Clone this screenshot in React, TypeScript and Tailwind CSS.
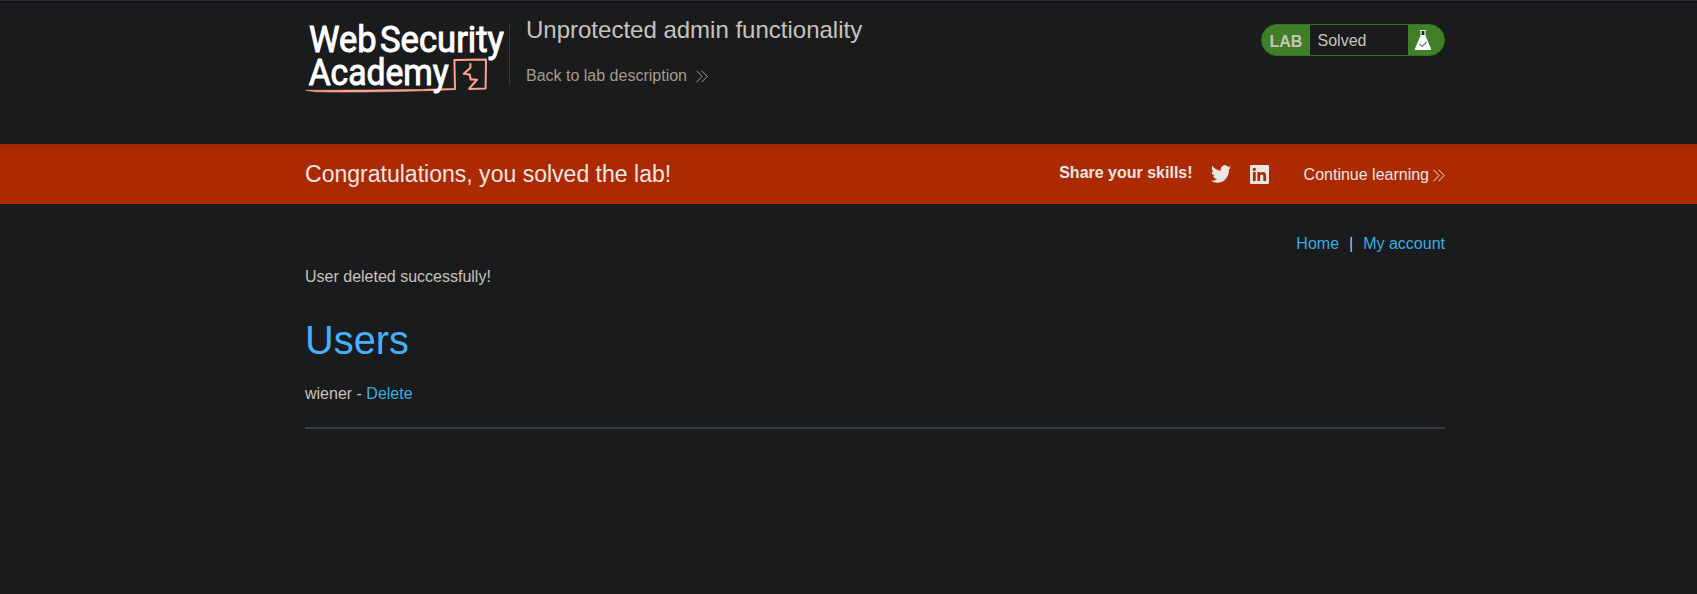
import React from 'react';

function Chevrons({ className }: { className?: string }) {
  return (
    <svg className={className} width="12" height="13" viewBox="0 0 12 13" fill="none" stroke="currentColor" strokeWidth="1">
      <path d="M0.6 0.8 6 6.5 0.6 12.2M5.6 0.8 11.2 6.5 5.6 12.2" />
    </svg>
  );
}

function Logo() {
  return (
    <svg width="205" height="90" viewBox="304 10 205 90" className="shrink-0" role="img" aria-label="Web Security Academy">
      <g fill="none" stroke="#ffa28b" strokeLinejoin="round" strokeLinecap="round">
        <path d="M425 90 455 89 454.4 60 486 59.6 485.6 88.6 469.4 89" strokeWidth="2" />
        <path d="M470.4 64 470.4 67.8 463.8 73.8 469.8 74.6 470.6 79.4 477 79.8 469.4 88.4" strokeWidth="2.1" />
        <path d="M306 90.3C345 90.3 400 89.7 432 89.3L440 90C400 92 340 92.4 316 91.8Z" fill="#ffa28b" strokeWidth="0.6" />
      </g>
      <g fill="#fff" stroke="#fff" strokeWidth="1" fontFamily="Roboto, sans-serif" fontWeight="400" fontSize="36.5">
        <text x="309" y="52" textLength="67.5" lengthAdjust="spacingAndGlyphs">Web</text>
        <text x="380" y="52" textLength="124" lengthAdjust="spacingAndGlyphs">Security</text>
        <text x="308.7" y="84.6" textLength="140" lengthAdjust="spacingAndGlyphs">Academy</text>
      </g>
    </svg>
  );
}

function LabStatus() {
  return (
    <div className="mt-[22px] flex h-8 w-[184px] overflow-hidden rounded-full border border-[#26782a] bg-[#407f26] leading-[30px]">
      <span className="w-12 pt-[2px] pl-[7.5px] font-bold text-[#c8c3bc]">LAB</span>
      <p className="w-[98px] bg-[#1a1b1c] pt-px pl-[7.5px] text-[#c8c3bc]">Solved</p>
      <svg width="30" height="30" viewBox="1408 25 30 30" className="shrink-0">
        <path d="M1420.5 30.5h5v5.2l5.6 13.1q.4 1.2-.8 1.2h-14.6q-1.2 0-.8-1.2l5.6-13.1z" fill="#fff" />
        <path d="M1419.8 30.5h6.4" stroke="#d8dfd4" strokeWidth="1" />
        <path d="M1421.6 31h2.8v4h-2.8z" fill="#1a2b1a" />
        <path d="m1419.4 44.2 2.9 2.3 4.3-4.5" fill="none" stroke="#777" strokeWidth="1.1" />
      </svg>
    </div>
  );
}

export default function App() {
  return (
    <div className="min-h-screen border-t border-[#2d2f3a] bg-[#1a1b1c] text-base text-[#c8c3bc] [font-family:'Liberation_Sans',Arial,sans-serif]">
      <header className="h-[143px] border-t border-[#0e0f10]">
        <div className="ml-[305px] flex w-[1140px] items-start">
          <div className="-ml-px mt-2 flex">
            <Logo />
          </div>
          <div className="mt-[22px] h-[62px] w-px bg-[#35393b]" />
          <div className="ml-4 flex-1">
            <h2 className="mt-[12px] text-[24px] leading-8">Unprotected admin functionality</h2>
            <a className="mt-[18px] flex items-center leading-6 text-[#a39b8e]">
              Back to lab description
              <Chevrons className="ml-[9px]" />
            </a>
          </div>
          <LabStatus />
        </div>
      </header>

      <section className="h-[60px] border-t-[3px] border-[#a02a05] bg-[#ab2a02] text-[#e8e6e3]">
        <div className="ml-[305px] flex w-[1140px] items-start">
          <h4 className="flex-1 pt-[11px] text-[23.04px] leading-8">Congratulations, you solved the lab!</h4>
          <span className="pt-[14px] font-bold leading-6">Share your skills!</span>
          <svg className="ml-[18px] mt-[18px]" width="20" height="18" viewBox="0 2 24 20" preserveAspectRatio="none" fill="#e8e6e3">
            <path d="M23.953 4.57a10 10 0 0 1-2.825.775 4.958 4.958 0 0 0 2.163-2.723 9.99 9.99 0 0 1-3.127 1.184 4.92 4.92 0 0 0-8.384 4.482C7.69 8.095 4.067 6.13 1.64 3.162a4.822 4.822 0 0 0-.666 2.475c0 1.71.87 3.213 2.188 4.096a4.904 4.904 0 0 1-2.228-.616v.06a4.923 4.923 0 0 0 3.946 4.827 4.996 4.996 0 0 1-2.212.085 4.936 4.936 0 0 0 4.604 3.417 9.867 9.867 0 0 1-6.102 2.105c-.39 0-.779-.023-1.17-.067a13.995 13.995 0 0 0 7.557 2.209c9.053 0 13.998-7.496 13.998-13.985 0-.21 0-.42-.015-.63A9.935 9.935 0 0 0 24 4.59z" />
          </svg>
          <svg className="ml-[19px] mt-[18px]" width="19" height="19" viewBox="0 0 19 19">
            <rect width="19" height="19" rx="1.2" fill="#e8e6e3" />
            <g fill="#ab2a02">
              <circle cx="4.3" cy="4.3" r="1.6" />
              <path d="M2.9 7.1h2.8v8.9H2.9zM7.4 7.1h2.7v1.2c.5-.9 1.5-1.4 2.7-1.4 2.6 0 3.3 1.6 3.3 4.1v5h-2.8v-4.4c0-1.2-.1-2.2-1.5-2.2s-1.6 1-1.6 2.2V16H7.4z" />
            </g>
          </svg>
          <a className="ml-[35px] flex items-center pt-4 leading-6">
            Continue learning
            <Chevrons className="ml-1" />
          </a>
        </div>
      </section>

      <main className="ml-[305px] w-[1140px] pt-7">
        <nav className="flex justify-end gap-[10px] leading-6">
          <a className="text-[#3aade0]">Home</a>
          <span>|</span>
          <a className="text-[#3aade0]">My account</a>
        </nav>
        <p className="mt-[9px] leading-6">User deleted successfully!</p>
        <h1 className="mt-[25px] text-[39.8px] leading-[52px] text-[#45b0ff]">Users</h1>
        <p className="mt-4 leading-6">
          wiener - <a className="text-[#3aade0]">Delete</a>
        </p>
        <hr className="mt-[21px] border-t-2 border-[#373c3e]" />
      </main>
    </div>
  );
}
